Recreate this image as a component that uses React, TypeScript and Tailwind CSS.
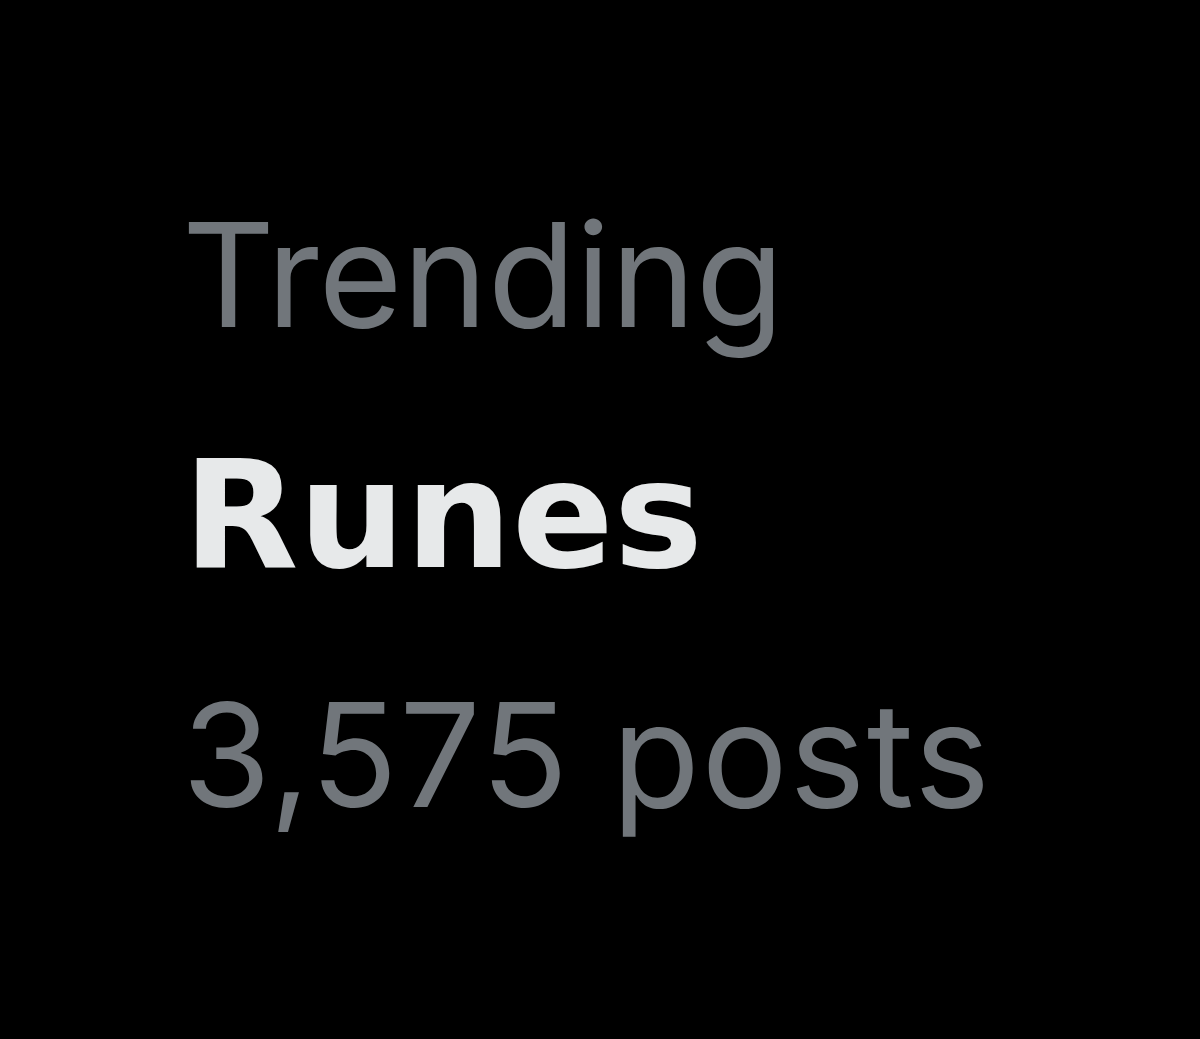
export default function App() {
  return (
    <div className="w-[1200px] h-[1039px] bg-black pl-[182px] pt-[155px] font-['Inter',sans-serif]">
      <div className="text-[144px] leading-[240px] text-[#71767b]">Trending</div>
      <div className="text-[150px] leading-[240px] font-bold text-[#e7e9ea] font-['DejaVu_Sans',sans-serif] pl-[1px]">
        Runes
      </div>
      <div className="text-[144px] leading-[240px] text-[#71767b] tracking-[1.5px]">3,575 posts</div>
    </div>
  );
}
